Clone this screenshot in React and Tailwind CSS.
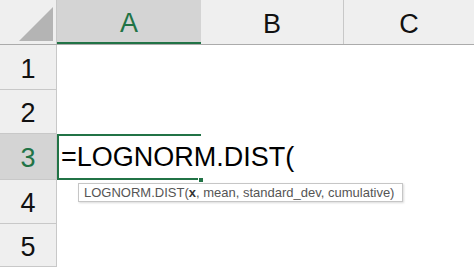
import React from 'react';

const rows = [1, 2, 3, 4, 5];
const rowH = ['h-[45px]', 'h-[44px]', 'h-[46px]', 'h-[44px]', 'h-[43px]'];

export default function App() {
  return (
    <div className="relative w-[474px] h-[267px] overflow-hidden bg-white font-['Liberation_Sans',sans-serif]">
      {/* column headers */}
      <div className="flex h-[45px] border-b border-[#ababab] bg-[#efefef]">
        <div className="w-[57px] shrink-0 border-r border-[#c8c8c8] flex items-end justify-end pb-[3px] pr-[3px]">
          <svg width="34" height="34" viewBox="0 0 34 34">
            <polygon points="34,0 34,34 0,34" fill="#b4b4b4" />
          </svg>
        </div>
        <div className="w-[144px] shrink-0 bg-[#d4d4d4] border-b-2 border-[#217346] flex items-center justify-center pt-[5px] text-[27px] text-[#217346]">
          A
        </div>
        <div className="w-[143px] shrink-0 border-r border-[#c8c8c8] flex items-center justify-center pt-[4px] text-[27px] text-[#111]">
          B
        </div>
        <div className="flex-1 flex items-center justify-center pt-[4px] text-[27px] text-[#111]">
          C
        </div>
      </div>

      {/* rows */}
      {rows.map((r, i) => (
        <div key={r} className={`flex ${rowH[i]}`}>
          <div
            className={`w-[57px] shrink-0 border-r border-b border-[#c8c8c8] flex items-center justify-center pt-[4px] text-[27px] ${
              r === 3 ? 'bg-[#d4d4d4] text-[#217346]' : 'bg-[#efefef] text-[#111]'
            }`}
          >
            {r}
          </div>
          {r === 3 ? (
            <div className="relative flex-1 flex items-center">
              <div className="absolute left-0 top-0 w-[144px] h-full border-t-2 border-l-2 border-b-2 border-[#217346]" />
              <div className="absolute left-[141px] bottom-[-3px] w-[6px] h-[6px] bg-[#217346] border border-white" />
              <span className="relative pl-[4px] text-[27px] text-black whitespace-nowrap">=LOGNORM.DIST(</span>
            </div>
          ) : (
            <div className="flex-1" />
          )}
        </div>
      ))}

      {/* function tooltip */}
      <div className="absolute left-[78px] top-[183px] w-[325px] h-[19px] bg-white border border-[#c6c6c6] shadow-[1px_1px_2px_rgba(0,0,0,0.15)] flex items-center pl-[5px] text-[13px] text-[#555] whitespace-nowrap">
        LOGNORM.DIST(<span className="font-bold text-[#333]">x</span>, mean, standard_dev, cumulative)
      </div>
    </div>
  );
}
